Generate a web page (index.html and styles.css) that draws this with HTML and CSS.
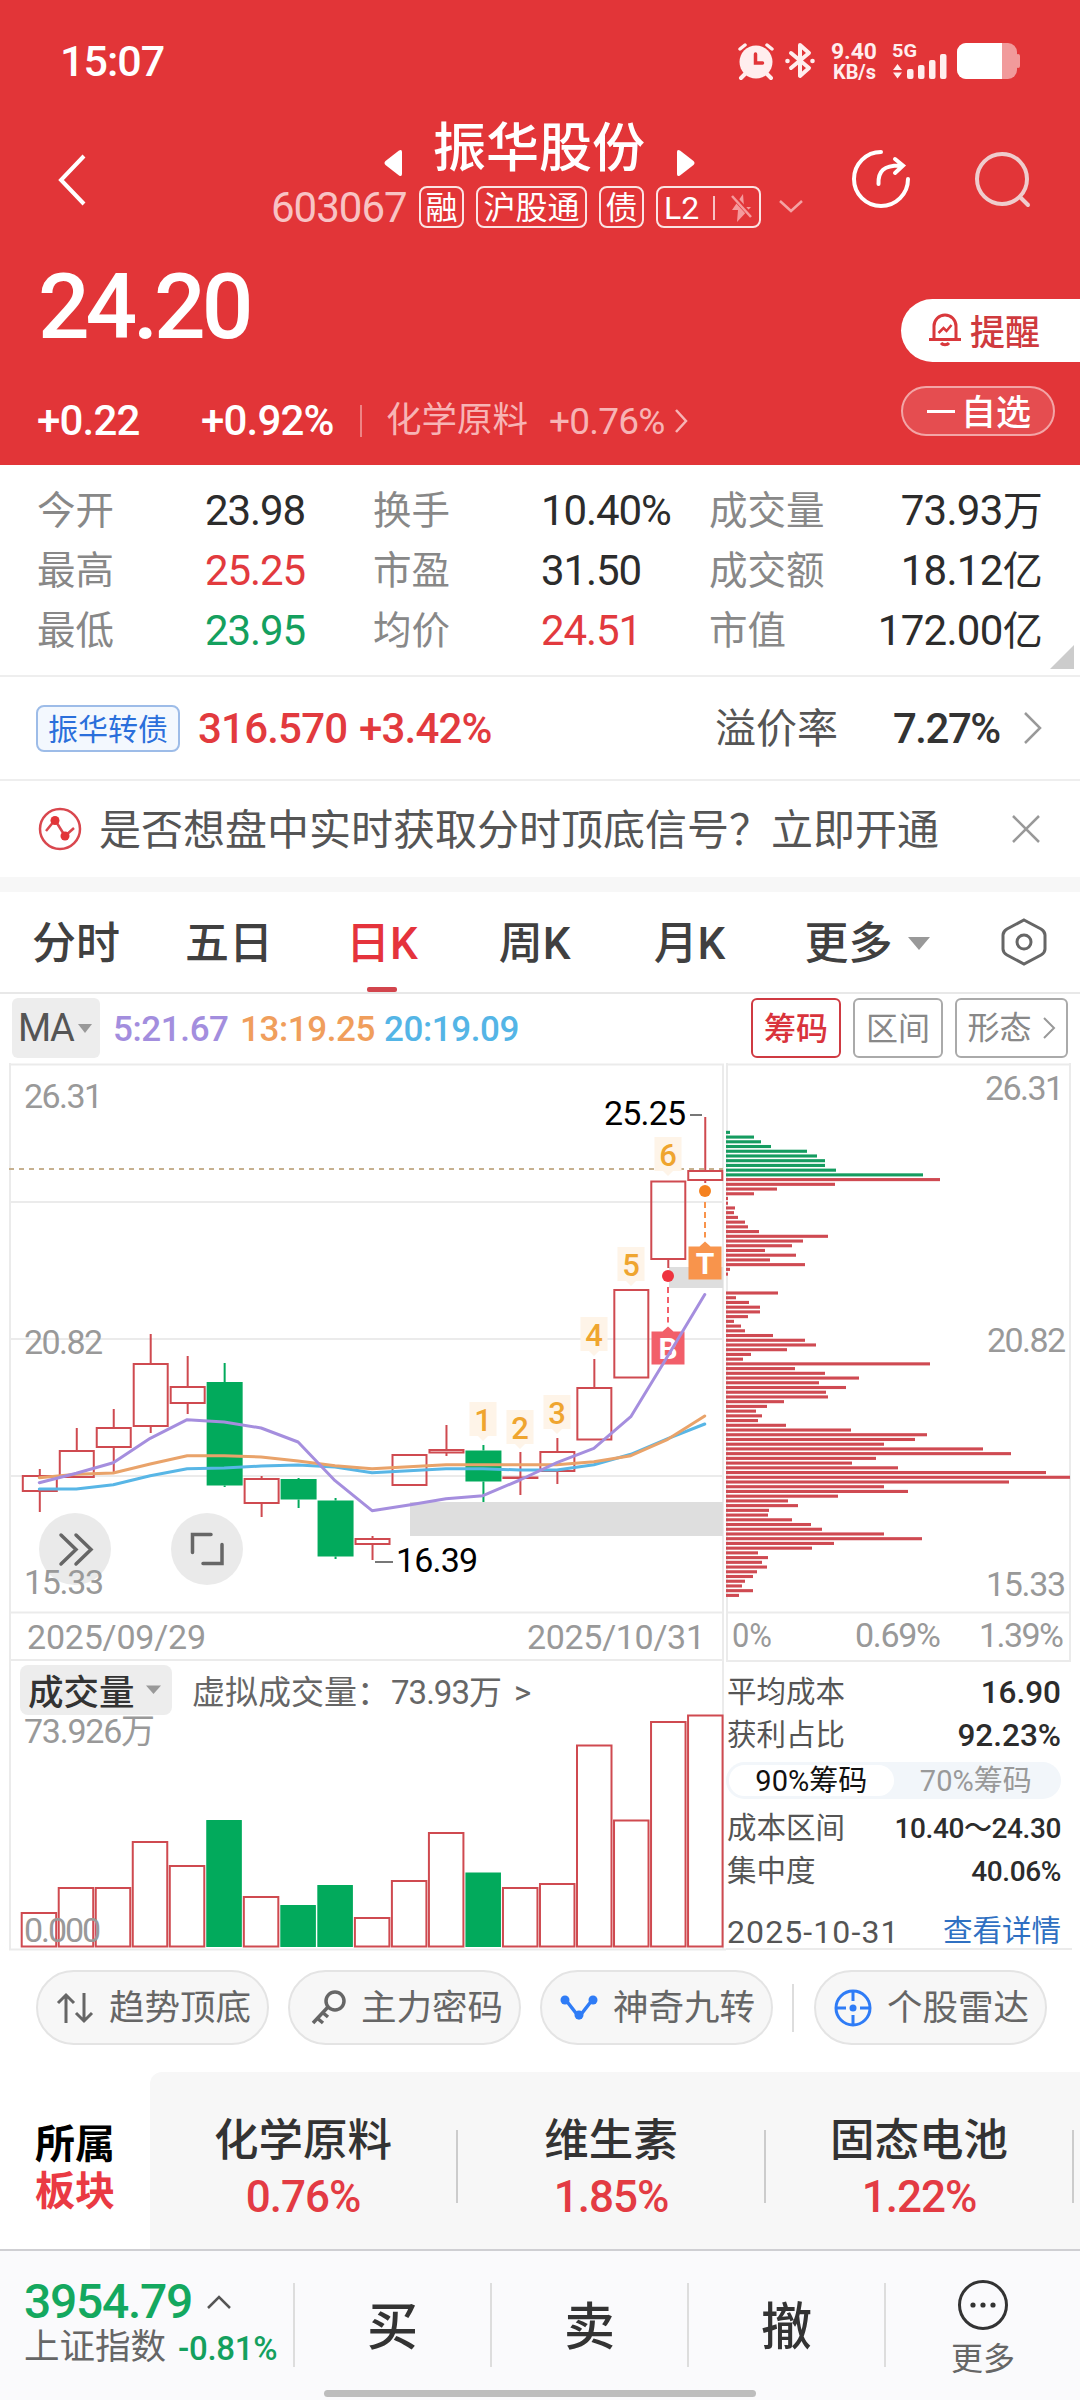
FILE: index.html
```html
<!DOCTYPE html>
<html lang="zh-CN">
<head>
    <meta charset="UTF-8">
    <meta name="viewport" content="width=device-width, initial-scale=1.0">
    <title>振华股份 603067</title>
    <link rel="stylesheet" href="styles.css">
</head>

<body>
    <header class="header">
        <div class="status-bar">
            <span class="clock">15:07</span>
            <svg class="status-icons" width="284" height="44" viewBox="0 0 284 44">
                <!-- 闹钟 -->
                <g stroke="#ffeeee" fill="none" stroke-linecap="round">
                    <circle cx="20" cy="22" r="16.500" fill="#ffeeee" stroke="none"/>
                    <path d="M4 9l5-4M36 9l-5-4" stroke-width="3.500"/>
                    <path d="M9 34l-4 4M31 34l4 4" stroke-width="4"/>
                    <path d="M19.500 14v9h7" stroke="#e23538" stroke-width="3.500"/>
                </g>
                <!-- 蓝牙 -->
                <path d="M55 13l18 15-9 8V5l9 8-18 15" fill="none" stroke="#ffeeee" stroke-width="4" stroke-linejoin="round" stroke-linecap="round"/>
                <circle cx="51.500" cy="21" r="2.300" fill="#ffeeee"/>
                <circle cx="76.500" cy="21" r="2.300" fill="#ffeeee"/>
                <g class="status-text">
                    <text x="95" y="19" textLength="46" lengthAdjust="spacingAndGlyphs">9.40</text>
                    <text x="97" y="38.500" class="unit" textLength="43" lengthAdjust="spacingAndGlyphs">KB/s</text>
                    <text x="156" y="17" textLength="25" lengthAdjust="spacingAndGlyphs" class="net">5G</text>
                </g>
                <path d="M157 30l4.500-6 4.500 6zM157 32.500l4.500 6 4.500-6z" fill="#ffeeee"/>
                <g fill="#ffeeee">
                    <rect x="171" y="29" width="6.500" height="10" rx="2"/>
                    <rect x="182" y="25" width="6.500" height="14" rx="2"/>
                    <rect x="193" y="20" width="6.500" height="19" rx="2"/>
                    <rect x="204" y="14" width="6.500" height="25" rx="2"/>
                </g>
                <rect x="221" y="3" width="60" height="36" rx="9" fill="#f19a9b"/>
                <rect x="280" y="14" width="4" height="14" rx="2" fill="#f19a9b"/>
                <path d="M230 3h36v36h-36a9 9 0 0 1-9-9V12a9 9 0 0 1 9-9z" fill="#fff"/>
            </svg>
        </div>

        <div class="title-bar">
            <svg class="back" width="32" height="52" viewBox="0 0 32 52"><path d="M28 2L5 26l23 24" fill="none" stroke="#fff" stroke-width="4"/></svg>
            <div class="stock">
                <div class="stock-name">
                    <svg width="20" height="26" viewBox="0 0 20 26"><path d="M19 2v22q0 3-3 1.500L2.500 15q-2-2 0-4L16 .5q3-1.500 3 1.500z" fill="#fff"/></svg>
                    <h1>振华股份</h1>
                    <svg width="20" height="26" viewBox="0 0 20 26"><path d="M1 2v22q0 3 3 1.500L17.500 15q2-2 0-4L4 .5q-3-1.500-3 1.500z" fill="#fff"/></svg>
                </div>
                <div class="stock-tags">
                    <span class="code">603067</span>
                    <span class="tag">融</span>
                    <span class="tag">沪股通</span>
                    <span class="tag">债</span>
                    <span class="tag level">L2<i></i>
                        <svg width="22" height="30" viewBox="0 0 22 30"><path d="M12 1L1 17h6l-1 12L20 14h-7z" fill="#f59a9c"/><path d="M1 2l20 22" stroke="#e23538" stroke-width="5"/><path d="M1 3l19 21" stroke="#f59a9c" stroke-width="2.500"/></svg>
                    </span>
                    <svg width="26" height="16" viewBox="0 0 26 16"><path d="M2 2l11 10L24 2" fill="none" stroke="#f4a3a4" stroke-width="2.500"/></svg>
                </div>
            </div>
            <svg class="share" width="62" height="62" viewBox="0 0 62 62" fill="none" stroke="#fff" stroke-width="4" stroke-linecap="round">
                <path d="M32 4a27 27 0 1 0 27 27"/>
                <path d="M29.500 36c-.5-13 5-19 23-18.500M46 11l8 6.500-8 7.500"/>
            </svg>
            <svg class="search" width="60" height="60" viewBox="0 0 60 60" fill="none" stroke="#efcccd" stroke-width="4" stroke-linecap="round">
                <circle cx="29" cy="29" r="25"/>
                <path d="M47 47l8 8"/>
            </svg>
        </div>

        <div class="quote">
            <div class="quote-main">
                <div class="price">24.20</div>
                <div class="change">
                    <span class="diff">+0.22</span>
                    <span class="rate">+0.92%</span>
                    <span class="industry">化学原料</span>
                    <span class="industry-rate">+0.76%</span>
                    <svg width="16" height="26" viewBox="0 0 16 26"><path d="M3 2l10 11L3 24" fill="none" stroke="#f7b4b5" stroke-width="2.500"/></svg>
                </div>
            </div>
            <div class="quote-actions">
                <button class="remind">
                    <svg width="34" height="36" viewBox="0 0 34 36" fill="none" stroke="#d9383c" stroke-width="3">
                        <path d="M6 27V15a11 11 0 0 1 22 0v12M1 28.500h32"/>
                        <path d="M13 32a4.500 3 0 0 0 8 0"/>
                        <path d="M10.500 22l5-5 3 3 5-6" stroke-width="2.500"/>
                    </svg>
                    提醒
                </button>
                <button class="favorite"><i></i>自选</button>
            </div>
        </div>
    </header>

    <section class="stats">
        <span class="k">今开</span><span class="v">23.98</span>
        <span class="k">换手</span><span class="v">10.40%</span>
        <span class="k">成交量</span><span class="v end">73.93<b>万</b></span>
        <span class="k">最高</span><span class="v up">25.25</span>
        <span class="k">市盈</span><span class="v">31.50</span>
        <span class="k">成交额</span><span class="v end">18.12<b>亿</b></span>
        <span class="k">最低</span><span class="v down">23.95</span>
        <span class="k">均价</span><span class="v up">24.51</span>
        <span class="k">市值</span><span class="v end">172.00<b>亿</b></span>
        <i class="corner"></i>
    </section>

    <section class="bond">
        <span class="bond-name">振华转债</span>
        <span class="bond-price">316.570</span>
        <span class="bond-rate">+3.42%</span>
        <span class="premium">溢价率</span>
        <span class="premium-rate">7.27%</span>
        <svg width="22" height="34" viewBox="0 0 22 34"><path d="M3 2l15 15L3 32" fill="none" stroke="#999" stroke-width="2.500"/></svg>
    </section>

    <section class="notice">
        <svg width="44" height="44" viewBox="0 0 44 44">
            <circle cx="22" cy="22" r="20" fill="none" stroke="#d9474e" stroke-width="2.500"/>
            <path d="M8 24l9-11 10 16 9-8" fill="none" stroke="#d9474e" stroke-width="2.500"/>
            <circle cx="17" cy="13.500" r="4.500" fill="#e23538"/>
            <circle cx="27" cy="29" r="4.500" fill="#e23538"/>
        </svg>
        <p>是否想盘中实时获取分时顶底信号？立即开通</p>
        <svg class="close" width="30" height="30" viewBox="0 0 30 30"><path d="M2 2l26 26M28 2L2 28" stroke="#999" stroke-width="2.500"/></svg>
    </section>

    <nav class="tabs">
        <a class="tab">分时</a>
        <a class="tab">五日</a>
        <a class="tab active">日K</a>
        <a class="tab">周K</a>
        <a class="tab">月K</a>
        <a class="tab more">更多<i class="caret"></i></a>
        <svg width="48" height="50" viewBox="0 0 48 50" fill="none" stroke="#666" stroke-width="3">
            <path d="M24 3l17 9q4 2.500 4 6v14q0 3.500-4 6l-17 9-17-9q-4-2.500-4-6V18q0-3.500 4-6z"/>
            <circle cx="24" cy="25" r="7"/>
        </svg>
    </nav>

    <div class="ma-bar">
        <span class="ma-select">MA<i class="caret"></i></span>
        <span class="ma5">5:21.67</span>
        <span class="ma13">13:19.25</span>
        <span class="ma20">20:19.09</span>
        <span class="box on">筹码</span>
        <span class="box">区间</span>
        <span class="box wide">形态<svg width="14" height="24" viewBox="0 0 14 24"><path d="M2 2l10 10L2 22" fill="none" stroke="#999" stroke-width="2"/></svg></span>
    </div>

    <main class="charts">
        <svg id="kline" class="kline" width="726" height="890" viewBox="0 1062 726 890">
            <g class="grid">
                <path d="M9 1064.500H724M10 1063V1950M723 1064V1950M10 1202H723M10 1339H723M10 1476H723M10 1612.500H723M10 1660H723M9 1949.500H726"/>
            </g>
            <rect x="410" y="1502" width="313" height="34" fill="#dedede"/>
            <rect x="669" y="1267" width="54" height="21" fill="#dedede"/>
            <path d="M9 1169H723" stroke="#c6b08f" stroke-width="2" stroke-dasharray="5 5"/>
            <g class="round-btn">
                <circle cx="75" cy="1549" r="36"/>
                <circle cx="207" cy="1549" r="36"/>
                <path d="M61 1535l15 14.500-15 14.500M76 1535l15 14.500-15 14.500"/>
                <path d="M211 1534.500h-18.500v18M203 1563.500h19v-19"/>
            </g>
            <g id="candles"></g>
            <g id="badges" class="badges"></g>
            <g id="lines" class="lines"></g>
            <g class="axis">
                <text x="24" y="1108" textLength="79">26.31</text>
                <text x="24" y="1354" textLength="79">20.82</text>
                <text x="24" y="1594" textLength="80">15.33</text>
                <text x="27" y="1649" textLength="179">2025/09/29</text>
                <text x="527" y="1649" textLength="178">2025/10/31</text>
                <text x="24" y="1743" textLength="131">73.926万</text>
            </g>
            <g class="extreme">
                <text x="604" y="1125" textLength="82">25.25</text>
                <text x="396" y="1572" textLength="82">16.39</text>
                <path d="M690 1115h12M375 1562h18"/>
            </g>
            <!-- 成交量 -->
            <rect x="20" y="1665" width="152" height="50" rx="8" fill="#ededed"/>
            <text x="28" y="1705" class="vol-title">成交量</text>
            <path d="M146 1685.500h15l-7.500 8.500z" fill="#999"/>
            <text x="192" y="1703.500" class="vol-desc">虚拟成交量：</text>
            <text x="391" y="1703.500" class="vol-desc" textLength="111">73.93万</text>
            <text x="514" y="1703.500" class="vol-desc">&gt;</text>
            <g id="volumes"></g>
            <text x="24" y="1942" class="axis-zero" textLength="77">0.000</text>
        </svg>

        <div class="chips">
            <svg width="346" height="600" viewBox="726 1062 346 600">
                <path class="frame" d="M726 1064.500H1071M727 1063V1661M1070 1063V1661M726 1612.500H1070M726 1661H1071"/>
                <g id="chipBars"></g>
                <g class="axis">
                    <text x="985" y="1100" textLength="79">26.31</text>
                    <text x="987" y="1352" textLength="79">20.82</text>
                    <text x="986" y="1596" textLength="80">15.33</text>
                    <text x="732" y="1647" textLength="40" lengthAdjust="spacingAndGlyphs">0%</text>
                    <text x="855" y="1647" textLength="86">0.69%</text>
                    <text x="979" y="1647" textLength="85">1.39%</text>
                </g>
            </svg>
            <div class="chip-info">
                <p class="row"><span>平均成本</span><b>16.90</b></p>
                <p class="row"><span>获利占比</span><b>92.23%</b></p>
                <p class="switch"><span class="on">90%筹码</span><span>70%筹码</span></p>
                <p class="row small"><span>成本区间</span><b>10.40～24.30</b></p>
                <p class="row small"><span>集中度</span><b>40.06%</b></p>
                <p class="row foot"><span>2025-10-31</span><a>查看详情</a></p>
            </div>
        </div>
    </main>

    <div class="tools">
        <a class="tool">
            <svg width="38" height="32" viewBox="0 0 38 32" fill="none" stroke="#666" stroke-width="3"><path d="M10 31V3M2 11l8-8 8 8M28 1v28M20 21l8 8 8-8"/></svg>
            趋势顶底
        </a>
        <a class="tool">
            <svg width="38" height="36" viewBox="0 0 38 36" fill="none" stroke="#666" stroke-width="3.500"><circle cx="27" cy="11" r="9"/><path d="M20 17L5 33M9 28l6 5M14 22l6 5"/></svg>
            主力密码
        </a>
        <a class="tool">
            <svg width="38" height="32" viewBox="0 0 38 32"><path d="M5 7l14 18L33 7" fill="none" stroke="#2f7cf6" stroke-width="3.500"/><g fill="#2f7cf6"><circle cx="5" cy="8" r="4.500"/><circle cx="19" cy="23" r="4.500"/><circle cx="33" cy="8" r="4.500"/></g></svg>
            神奇九转
        </a>
        <i class="split"></i>
        <a class="tool">
            <svg width="38" height="38" viewBox="0 0 38 38" fill="none" stroke="#2f7cf6" stroke-width="3"><circle cx="19" cy="19" r="17"/><path d="M19 2v10M19 26v10M2 19h10M26 19h10"/><circle cx="19" cy="19" r="3.500" fill="#2f7cf6" stroke="none"/></svg>
            个股雷达
        </a>
    </div>

    <section class="sectors">
        <div class="sector-title">所属<em>板块</em></div>
        <div class="sector-list">
            <div class="sector"><span>化学原料</span><b>0.76%</b></div>
            <div class="sector"><span>维生素</span><b>1.85%</b></div>
            <div class="sector"><span>固态电池</span><b>1.22%</b></div>
        </div>
    </section>

    <footer class="bottom">
        <div class="bottom-row">
            <div class="index">
                <div class="index-value">3954.79
                    <svg width="26" height="16" viewBox="0 0 26 16"><path d="M2 14L13 3l11 11" fill="none" stroke="#555" stroke-width="2.500"/></svg>
                </div>
                <div class="index-name">上证指数<b>-0.81%</b></div>
            </div>
            <a class="trade">买</a>
            <a class="trade">卖</a>
            <a class="trade">撤</a>
            <a class="menu">
                <svg width="52" height="52" viewBox="0 0 52 52"><circle cx="26" cy="26" r="23.500" fill="none" stroke="#333" stroke-width="3"/><g fill="#333"><circle cx="16" cy="26" r="2.600"/><circle cx="26" cy="26" r="2.600"/><circle cx="36" cy="26" r="2.600"/></g></svg>
                更多
            </a>
        </div>
        <div class="home"></div>
    </footer>

    <script src="chart.js"></script>
</body>
</html>
```
FILE: styles.css
```css
* {
    box-sizing: border-box;
    margin: 0;
    padding: 0;
}

body {
    width: 1080px;
    height: 2400px;
    overflow: hidden;
    background: #fff;
    color: #333;
    font-family: Roboto, "Noto Sans CJK SC", sans-serif;
    line-height: 1;
}

svg {
    display: block;
    flex: none;
}

b, i, em {
    font-style: normal;
    font-weight: inherit;
}

/* 顶部 */
.header {
    height: 465px;
    background: #e23538;
    color: #fff;
}

.status-bar {
    display: flex;
    justify-content: space-between;
    align-items: flex-start;
    height: 110px;
    padding: 40px 60px 0 60px;
}

.clock {
    font-size: 43px;
    font-weight: 500;
    letter-spacing: -1px;
}

.status-text {
    fill: #ffeeee;
    font-size: 22.5px;
    font-weight: 700;
}

.status-text .unit {
    font-size: 20px;
}

.status-text .net {
    font-size: 18px;
}

.title-bar {
    display: flex;
    height: 128px;
    padding-left: 56px;
}

.back {
    margin: 44px 183px 0 0;
}

.stock-name {
    display: flex;
    align-items: center;
    height: 76px;
    padding-left: 112px;
}

.stock-name svg {
    margin-top: 30px;
}

.stock-name h1 {
    padding: 3px 31px 0 30px;
    font-size: 53px;
    font-weight: 500;
}

.stock-tags {
    display: flex;
    align-items: center;
    width: 540px;
    height: 42px;
}

.code {
    width: 148px;
    padding-top: 1px;
    color: #f8c3c4;
    font-size: 42px;
    letter-spacing: -1px;
}

.tag {
    display: flex;
    align-items: center;
    justify-content: center;
    width: 45px;
    height: 42px;
    margin-right: 12px;
    padding-top: 1px;
    border: 2px solid #fbe3e3;
    border-radius: 8px;
    font-size: 32px;
    white-space: nowrap;
}

.tag:nth-child(3) {
    width: 111px;
}

.tag.level {
    width: 105px;
    margin-right: 17px;
}

.level i {
    width: 2px;
    height: 24px;
    margin: 0 16px 0 14px;
    background: #f8c3c4;
}

.share {
    margin: 38px 0 0 38px;
}

.search {
    margin: 40px 0 0 62px;
}

.quote {
    display: flex;
    justify-content: space-between;
}

.price {
    padding: 24px 0 0 38px;
    font-size: 91px;
    font-weight: 500;
    letter-spacing: -4.2px;
}

.change {
    display: flex;
    align-items: center;
    height: 46px;
    margin-top: 45px;
    padding-left: 37px;
    font-size: 42px;
    font-weight: 500;
    letter-spacing: -0.8px;
}

.diff {
    width: 164px;
}

.rate {
    width: 161px;
    height: 32px;
    border-right: 2px solid #ee8485;
    line-height: 32px;
}

.industry {
    width: 187px;
    padding-left: 24px;
    color: #f7b4b5;
    font-size: 35.5px;
    font-weight: 400;
    letter-spacing: 0;
}

.industry-rate {
    width: 124px;
    color: #f7b4b5;
    font-size: 37px;
    font-weight: 400;
}

.quote-actions {
    width: 179px;
    padding-top: 61px;
}

.quote-actions button {
    display: flex;
    align-items: center;
    font-family: inherit;
    font-size: 35px;
    font-weight: 500;
}

.remind {
    gap: 8px;
    width: 179px;
    height: 63px;
    padding: 0 0 3px 27px;
    border: none;
    border-radius: 32px 0 0 32px;
    background: #fff;
    color: #cf3a3e;
}

.favorite {
    width: 154px;
    height: 50px;
    margin-top: 24px;
    padding: 0 0 3px 24px;
    border: 2px solid #f3a5a6;
    border-radius: 25px;
    background: #e54d50;
    color: #fff;
}

.favorite i {
    width: 28px;
    height: 3px;
    margin: 3px 6px 0 0;
    background: #fff;
}

/* 行情数据 */
.stats {
    position: relative;
    display: grid;
    grid-template-columns: 168px 168px 168px 168px 150px 183px;
    grid-auto-rows: 60px;
    align-items: center;
    height: 212px;
    padding: 16px 37px;
    border-bottom: 2px solid #eee;
}

.k {
    color: #888;
    font-size: 38.5px;
}

.v {
    color: #2c2c2c;
    font-size: 42px;
    letter-spacing: -1.1px;
    white-space: nowrap;
}

.v b {
    font-size: 40px;
}

.v.end {
    text-align: right;
    letter-spacing: -0.7px;
}

.v.up {
    color: #e23a3e;
}

.v.down {
    color: #14a05e;
}

.corner {
    position: absolute;
    right: 6px;
    bottom: 6px;
    border-left: 24px solid transparent;
    border-bottom: 24px solid #ccc;
}

.bond {
    display: flex;
    align-items: center;
    height: 104px;
    padding-left: 36px;
    border-bottom: 2px solid #eee;
    font-size: 42px;
    letter-spacing: -0.8px;
}

.bond-name {
    width: 144px;
    height: 47px;
    border: 2px solid #9dbce8;
    border-radius: 8px;
    background: #f3f8fe;
    color: #2a6fdb;
    font-size: 30px;
    line-height: 45px;
    letter-spacing: 0;
    text-align: center;
}

.bond-price,
.bond-rate {
    padding-top: 1px;
    color: #e23a3e;
    font-weight: 500;
}

.bond-price {
    width: 150px;
    margin-left: 18px;
}

.bond-rate {
    margin-left: 11px;
}

.premium {
    width: 178px;
    margin-left: auto;
    padding-top: 3px;
    color: #555;
    font-size: 41px;
    letter-spacing: 0;
}

.premium-rate {
    width: 129px;
    padding-top: 1px;
    font-weight: 500;
    letter-spacing: -1.5px;
}

.bond svg {
    margin-right: 36px;
}

.notice {
    display: flex;
    align-items: center;
    height: 111px;
    padding: 0 39px 0 38px;
    border-bottom: 15px solid #f7f7f7;
    color: #555;
    font-size: 42px;
}

.notice p {
    flex: 1;
    padding: 3px 0 0 17px;
}

/* K线周期 */
.tabs {
    display: flex;
    align-items: center;
    height: 102px;
    padding-left: 32px;
    border-bottom: 2px solid #e8e8e8;
    color: #404040;
    font-size: 44px;
    font-weight: 500;
}

.tab {
    display: flex;
    align-items: center;
    position: relative;
    height: 100px;
    margin-right: 65px;
    padding-top: 3px;
}

.tab:nth-child(3) {
    margin-left: 8px;
    margin-right: 81px;
}

.tab:nth-child(4) {
    margin-right: 83px;
}

.tab:nth-child(5) {
    margin-right: 79px;
}

.tab.more {
    width: 196px;
    margin-right: 0;
}

.tab.active {
    color: #e5333c;
}

.tab.active::after {
    content: "";
    position: absolute;
    left: 21px;
    bottom: 0;
    width: 30px;
    height: 5px;
    border-radius: 2px;
    background: #d2454d;
}

.caret {
    margin-left: 16px;
    border: 11px solid transparent;
    border-top: 13px solid #999;
    border-bottom: none;
}

.ma-bar {
    display: flex;
    align-items: center;
    height: 68px;
    padding: 0 12px;
    font-size: 35px;
}

.ma-bar > span {
    white-space: nowrap;
}

.ma-select {
    display: flex;
    align-items: center;
    width: 88px;
    height: 60px;
    margin-right: 13px;
    padding-left: 6px;
    border-radius: 6px;
    background: #ededed;
    color: #555;
    font-size: 38px;
    letter-spacing: -1.5px;
}

.ma-select .caret {
    margin-left: 5px;
    border-width: 9px 7px 0;
}

.ma5,
.ma13,
.ma20 {
    padding-top: 2px;
    font-weight: 500;
    letter-spacing: -0.4px;
}

.ma5 {
    width: 127px;
    color: #a38ede;
}

.ma13 {
    width: 144px;
    color: #f09e5c;
}

.ma20 {
    color: #54b5e6;
}

.box {
    width: 90px;
    height: 60px;
    margin-left: 12px;
    border: 2px solid #aaa;
    border-radius: 6px;
    color: #888;
    font-size: 32px;
    line-height: 58px;
    text-align: center;
}

.box.on {
    margin-left: auto;
    border-color: #cf3a42;
    color: #d9333c;
    font-weight: 500;
}

.box.wide {
    display: flex;
    align-items: center;
    justify-content: center;
    gap: 10px;
    width: 113px;
}

/* 图表 */
.charts {
    display: flex;
    height: 890px;
}

.grid path,
.frame {
    fill: none;
    stroke: #ebebeb;
    stroke-width: 2;
}

.axis text,
.axis-zero {
    fill: #999;
    font-size: 34px;
}

.extreme text {
    fill: #000;
    font-size: 34px;
}

.extreme path {
    stroke: #777;
    stroke-width: 2;
}

.lines {
    fill: none;
    stroke-width: 3;
    stroke-linejoin: round;
    stroke-linecap: round;
}

.badges rect {
    fill: #fef4e8;
}

.badges path {
    fill: #fef4e8;
}

.badges text {
    fill: #efa52f;
    font-size: 31px;
    font-weight: 500;
    text-anchor: middle;
}

.badges .mark {
    fill: #fff;
    font-size: 30px;
    font-weight: 700;
}

.round-btn circle {
    fill: #eaeaea;
}

.round-btn path {
    fill: none;
    stroke: #666;
    stroke-width: 3.5;
    stroke-linecap: round;
}

.vol-title {
    fill: #333;
    font-size: 35.5px;
    font-weight: 500;
}

.vol-desc {
    fill: #666;
    font-size: 33px;
}

.chips {
    width: 346px;
    height: 888px;
    border-bottom: 2px solid #ebebeb;
}

.chip-info {
    padding: 9px 11px 0 1px;
    color: #555;
    font-size: 29.5px;
}

.row {
    display: flex;
    justify-content: space-between;
    align-items: center;
    height: 43px;
}

.row b {
    color: #2c2c2c;
    font-size: 31.5px;
    font-weight: 500;
}

.row.small b {
    font-size: 28px;
    letter-spacing: -0.4px;
}

.switch {
    display: flex;
    height: 37px;
    margin: 5px 0 8px -1px;
    padding: 3px;
    border-radius: 19px;
    background: #f2f6fa;
}

.switch span {
    flex: 1;
    border-radius: 16px;
    color: #999;
    font-size: 29px;
    line-height: 33px;
    text-align: center;
}

.switch .on {
    background: #fff;
    color: #111;
}

.row.foot {
    margin-top: 17px;
    font-size: 32px;
    letter-spacing: 1.1px;
}

.row.foot a {
    color: #2f70c2;
    font-size: 29.5px;
    letter-spacing: 0;
}

/* 工具入口 */
.tools {
    display: flex;
    align-items: center;
    height: 120px;
    padding: 0 0 9px 36px;
}

.tool {
    display: flex;
    flex: none;
    align-items: center;
    gap: 15px;
    width: 233px;
    height: 75px;
    margin-right: 19px;
    padding: 3px 0 0 18px;
    border: 2px solid #e4e4e4;
    border-radius: 38px;
    background: #f7f7f7;
    color: #666;
    font-size: 35.5px;
    white-space: nowrap;
}

.tool svg {
    margin-top: -3px;
}

.split {
    width: 2px;
    height: 48px;
    margin-right: 20px;
    background: #ddd;
}

.sectors {
    display: flex;
    height: 177px;
}

.sector-title {
    width: 150px;
    padding: 49px 0 0 35px;
    color: #000;
    font-size: 40px;
    font-weight: 700;
    line-height: 47px;
}

.sector-title em {
    display: block;
    color: #ea3a43;
}

.sector-list {
    display: flex;
    flex: 1;
    border-radius: 12px 0 0 0;
    background: #f7f7f7;
}

.sector {
    position: relative;
    width: 308px;
    padding: 47px 2px 0 0;
    font-size: 44.5px;
    font-weight: 500;
    text-align: center;
}

.sector::after {
    content: "";
    position: absolute;
    right: 0;
    top: 58px;
    width: 2px;
    height: 73px;
    background: #ccc;
}

.sector span,
.sector b {
    display: block;
}

.sector b {
    margin-top: 11px;
    color: #e33b43;
    font-size: 44px;
    letter-spacing: -1px;
}

/* 底部交易栏 */
.bottom {
    height: 151px;
    border-top: 2px solid #cfcfd3;
    background: #fafafc;
}

.bottom-row {
    display: flex;
    height: 116px;
    padding-top: 32px;
}

.bottom-row > * {
    height: 84px;
}

.index {
    width: 295px;
    padding-left: 24px;
    border-right: 2px solid #ddd;
}

.index-value {
    display: flex;
    align-items: center;
    gap: 14px;
    height: 38px;
    color: #14a85f;
    font-size: 48px;
    font-weight: 500;
    letter-spacing: -1.3px;
}

.index-name {
    display: flex;
    align-items: center;
    height: 54px;
    color: #666;
    font-size: 35.5px;
}

.index-name b {
    margin-left: 12px;
    color: #14a05e;
    font-size: 33px;
    font-weight: 500;
    letter-spacing: -0.3px;
}

.trade {
    width: 197px;
    border-right: 2px solid #ddd;
    font-size: 51px;
    font-weight: 500;
    line-height: 89px;
    text-align: center;
}

.menu {
    display: flex;
    flex-direction: column;
    align-items: center;
    width: 194px;
    margin-top: -4px;
    color: #666;
    font-size: 32px;
    gap: 12px;
}

.home {
    width: 432px;
    height: 7px;
    margin: 23px auto 0;
    border-radius: 4px;
    background: #bdbdbd;
}
```
FILE: chart.js
```js
const NS = 'http://www.w3.org/2000/svg';
const RED = '#cf4a50';
const GREEN = '#02aa5c';
const STEP = 36.97;

function add(parent, tag, attrs, text) {
    const el = document.createElementNS(NS, tag);
    for (const key in attrs) el.setAttribute(key, attrs[key]);
    if (text) el.textContent = text;
    parent.appendChild(el);
}

// [最高, 实体上沿, 实体下沿, 最低, 涨跌]
const candles = [
    [1469, 1476, 1491, 1512, 1], [1428, 1451, 1477, 1477, 1], [1409, 1428, 1447, 1474, 1],
    [1334, 1364, 1426, 1433, 1], [1356, 1387, 1403, 1414, 1], [1363, 1382, 1485.5, 1487, 0],
    [1476, 1479, 1503, 1517, 1], [1478, 1479, 1499.5, 1508, 0], [1498, 1500.5, 1556.5, 1559, 0],
    [1536, 1539, 1544, 1560, 1], [1455, 1455, 1485, 1485, 1], [1425, 1450, 1452.5, 1456, 1],
    [1445, 1450.5, 1481.5, 1502, 0], [1452, 1477.5, 1478, 1495, 1], [1438, 1452, 1471, 1484, 1],
    [1359, 1388, 1439.5, 1439, 1], [1290, 1290, 1377.5, 1377, 1], [1181, 1181.5, 1259, 1268, 1],
    [1117, 1171, 1180, 1183, 1]
];

const candleLayer = document.getElementById('candles');
candles.forEach(([high, top, bottom, low, up], i) => {
    const x = 39.8 + STEP * i;
    const color = up ? RED : GREEN;
    add(candleLayer, 'path', { d: `M${x} ${high}V${top}M${x} ${bottom}V${low}`, stroke: color, 'stroke-width': 2 });
    add(candleLayer, 'rect', {
        x: x - (up ? 17 : 18), y: top, width: up ? 34 : 36, height: bottom - top,
        fill: up ? 'none' : GREEN, stroke: up ? RED : 'none', 'stroke-width': 2
    });
});

const volumes = [1913, 1888, 1888, 1842, 1866, 1820.5, 1897, 1905.5, 1885.5, 1918, 1881, 1833, 1873, 1888, 1884, 1745.5, 1820.5, 1722, 1715.5];
const volumeLayer = document.getElementById('volumes');
volumes.forEach((top, i) => {
    const x = 38.7 + 37.02 * i;
    const up = candles[i][4];
    add(volumeLayer, 'rect', {
        x: x - 17, y: top, width: 34.5, height: 1946.5 - top,
        fill: up ? 'none' : GREEN, stroke: up ? RED : GREEN, 'stroke-width': up ? 2 : 1
    });
});

// 均线
const ma = {
    '#58b6e6': [1489, 1489, 1484.7, 1475.7, 1468.7, 1468, 1466, 1465, 1467, 1472.7, 1470.7, 1468.7, 1468.7, 1470, 1470, 1464.7, 1454.3, 1438.7, 1424],
    '#e9a36a': [1477.7, 1474.3, 1473, 1464, 1455.7, 1455.7, 1457, 1461, 1465.7, 1468.7, 1466.7, 1464.7, 1464.7, 1464.7, 1464.7, 1461.7, 1455.7, 1439.3, 1416],
    '#a58ede': [1482.7, 1473.3, 1462.7, 1438.3, 1419.7, 1422, 1428, 1442, 1480.7, 1510.7, 1505, 1498.7, 1495.7, 1480, 1462.7, 1448.3, 1416.7, 1356, 1294.5]
};
const lineLayer = document.getElementById('lines');
for (const color in ma) {
    const points = ma[color].map((y, i) => `${39.3 + STEP * i},${y}`).join(' ');
    add(lineLayer, 'polyline', { points, stroke: color });
}

// 神奇九转序号
const badgeLayer = document.getElementById('badges');
[[483, 1402], [520, 1410], [557, 1395], [594, 1317], [631, 1247], [668, 1137]].forEach(([x, y], i) => {
    add(badgeLayer, 'rect', { x: x - 13.5, y, width: 27, height: 34 });
    add(badgeLayer, 'path', { d: `M${x - 5} ${y + 34}h10l-5 5z` });
    add(badgeLayer, 'text', { x, y: y + 29 }, String(i + 1));
});

// 买卖点
[[668, 1276, 1331.5, 'B', '#f25f6a', '#ef343f'], [705, 1191, 1246.5, 'T', '#f8944c', '#f58220']].forEach(([x, dot, y, name, color, dotColor]) => {
    add(badgeLayer, 'path', { d: `M${x} ${dot + 11}V${y - 9}`, style: `stroke:${color}`, 'stroke-width': 2, 'stroke-dasharray': '6 4' });
    add(badgeLayer, 'circle', { cx: x, cy: dot, r: 6, fill: dotColor });
    add(badgeLayer, 'path', { d: `M${x - 16.5} ${y}h11l5.500-5 5.500 5h11v33h-33z`, style: `fill:${color}` });
    add(badgeLayer, 'text', { x, y: y + 27, class: 'mark' }, name);
});

// 筹码分布
const chips = [
    4, 28, 35, 45, 81, 91, 99, 99, 110, 197,
    214, 109, 51, 28, 2, 2, 9, 8, 12, 19, 22, 33, 102, 77, 66, 39, 70, 44, 79, 4, 2, 0, 0, 0,
    52, 10, 23, 34, 34, 22, 8, 15, 19, 47, 79, 90, 61, 25, 17,
    204, 69, 99, 133, 93, 120, 100, 102, 58, 41, 30, 36, 32, 60, 125, 201, 189, 158, 257, 285, 150, 126, 172,
    320, 344, 283, 158, 182, 112, 62, 72, 43, 42, 66, 85, 96, 158, 196, 108, 86, 32, 42, 36, 41, 31, 27, 19, 16, 27, 13
];
const chipLayer = document.getElementById('chipBars');
chips.forEach((width, i) => {
    const y = 1130.8 + 4.725 * i;
    add(chipLayer, 'rect', { x: 726, y, width, height: 3.1, fill: i < 10 ? '#159c60' : '#cf4a52' });
});
```
